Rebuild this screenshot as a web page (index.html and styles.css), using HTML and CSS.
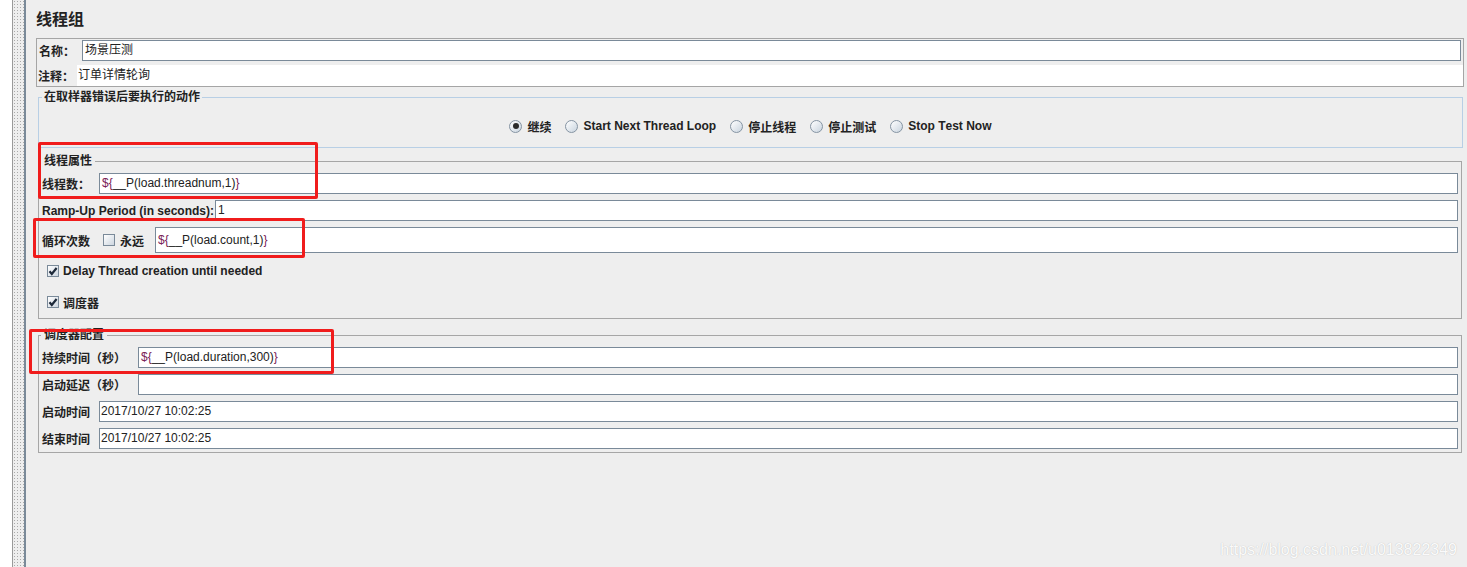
FILE: index.html
```html
<!DOCTYPE html>
<html lang="zh-CN">

<head>
    <meta charset="UTF-8">
    <title>线程组</title>
    <link rel="stylesheet" href="styles.css">
</head>

<body>
    <div class="app">
        <div class="splitter">
            <div class="split-white"></div>
            <div class="split-dots"></div>
            <div class="split-bar"></div>
        </div>

        <div class="panel">
            <h1 class="panel-title">线程组</h1>

            <div class="name-box">
                <div class="name-row">
                    <span class="label">名称：</span>
                    <div class="field">场景压测</div>
                </div>
                <div class="comment-row">
                    <span class="label">注释：</span>
                    <div class="field plain">订单详情轮询</div>
                </div>
            </div>

            <fieldset class="group group-action">
                <legend>在取样器错误后要执行的动作</legend>
                <div class="radio-row">
                    <span class="radio-item"><span class="radio-btn checked"></span>继续</span>
                    <span class="radio-item"><span class="radio-btn"></span>Start Next Thread Loop</span>
                    <span class="radio-item"><span class="radio-btn"></span>停止线程</span>
                    <span class="radio-item"><span class="radio-btn"></span>停止测试</span>
                    <span class="radio-item"><span class="radio-btn"></span>Stop Test Now</span>
                </div>
            </fieldset>

            <fieldset class="group group-thread">
                <legend>线程属性</legend>
                <div class="form-row row-threads">
                    <span class="label w-threads">线程数：</span>
                    <div class="field"><span class="var">${</span>__P(load.threadnum,1)<span class="var">}</span></div>
                </div>
                <div class="form-row row-ramp">
                    <span class="label">Ramp-Up Period (in seconds):</span>
                    <div class="field">1</div>
                </div>
                <div class="form-row row-loop">
                    <span class="label w-loop">循环次数</span>
                    <span class="check-box"></span>
                    <span class="label forever">永远</span>
                    <div class="field tall"><span class="var">${</span>__P(load.count,1)<span class="var">}</span></div>
                </div>
                <div class="check-row first">
                    <span class="check-box"><svg width="10" height="10" viewBox="0 0 10 10"><path d="M1.5 5.2 L3.8 8 L8.6 2" fill="none" stroke="#1e2a3a" stroke-width="2.2"/></svg></span>
                    <span class="label">Delay Thread creation until needed</span>
                </div>
                <div class="check-row">
                    <span class="check-box"><svg width="10" height="10" viewBox="0 0 10 10"><path d="M1.5 5.2 L3.8 8 L8.6 2" fill="none" stroke="#1e2a3a" stroke-width="2.2"/></svg></span>
                    <span class="label">调度器</span>
                </div>
            </fieldset>

            <fieldset class="group group-sched">
                <legend>调度器配置</legend>
                <div class="form-row">
                    <span class="label w-sched-long">持续时间（秒）</span>
                    <div class="field"><span class="var">${</span>__P(load.duration,300)<span class="var">}</span></div>
                </div>
                <div class="form-row">
                    <span class="label w-sched-long">启动延迟（秒）</span>
                    <div class="field"></div>
                </div>
                <div class="form-row">
                    <span class="label w-sched-short">启动时间</span>
                    <div class="field date">2017/10/27 10:02:25</div>
                </div>
                <div class="form-row">
                    <span class="label w-sched-short">结束时间</span>
                    <div class="field date">2017/10/27 10:02:25</div>
                </div>
            </fieldset>
        </div>

        <!-- anotaciones en rojo -->
        <div class="mark mark-threads"></div>
        <div class="mark mark-loop"></div>
        <div class="mark mark-sched"></div>

        <div class="watermark">https://blog.csdn.net/u013822349</div>
    </div>
</body>

</html>
```

FILE: styles.css
```css
body {
    margin: 0;
    padding: 0;
    background-color: #eeeeee;
    font-family: "Liberation Sans", "Noto Sans CJK SC", sans-serif;
    font-size: 12px;
    color: #333;
    overflow: hidden;
    text-spacing-trim: space-all;
    font-kerning: none;
}

.app {
    display: flex;
    height: 567px;
    position: relative;
}

/* Divisor izquierdo */
.splitter {
    display: flex;
    flex: 0 0 26px;
}

.split-white {
    width: 12px;
    background-color: #fff;
    border-right: 1px solid #9a9a9a;
}

.split-dots {
    width: 11px;
    background-color: #eeeeee;
    background-image: radial-gradient(circle, #a9a9a9 0.7px, transparent 0.9px);
    background-size: 3px 3px;
}

.split-bar {
    width: 2px;
    background-color: #7a8a99;
}

.panel {
    flex: 1;
    padding: 10px 3px 0 10px;
    min-width: 0;
}

.panel-title {
    margin: 0 0 8px;
    font-size: 16px;
    line-height: 20px;
    font-weight: bold;
    color: #222;
}

.label {
    font-weight: bold;
    color: #222;
    white-space: nowrap;
}

.field {
    flex: 1;
    height: 21px;
    box-sizing: border-box;
    background-color: #fff;
    border: 1px solid #7a8a99;
    padding: 0 2px;
    line-height: 19px;
    color: #222;
    white-space: nowrap;
    overflow: hidden;
}

.field.plain {
    border: none;
    line-height: 21px;
    padding-left: 1px;
}

.field.tall {
    height: 26px;
    line-height: 24px;
}

.field.date {
    padding-left: 1px;
}

.var {
    color: #7b2256;
}

/* Nombre y comentario */
.name-box {
    border: 1px solid #a5a5a5;
    padding: 1px 0 0;
}

.name-row {
    display: flex;
    align-items: center;
    padding: 0 2px 0 2px;
}

.name-row .label {
    margin-right: 7px;
}

.comment-row {
    display: flex;
    align-items: center;
    margin-top: 4px;
    padding-left: 1px;
}

.comment-row .label {
    margin-right: 3px;
}

/* Grupos */
.group {
    margin: 0 2px 0 2px;
    padding: 0 3px;
    border: 1px solid #a6a6a6;
    min-inline-size: 0;
}

.group legend {
    padding: 0 3px;
    font-weight: bold;
    line-height: 14px;
    color: #222;
}

.group-action {
    margin: 3px 1px 0 2px;
    padding: 12px 3px 11px;
    border-color: #b8cfe5;
}

.group-action legend {
    padding: 0 2px;
}

.radio-row {
    display: flex;
    justify-content: center;
    align-items: center;
    gap: 14px;
    height: 20px;
}

.radio-item {
    display: flex;
    align-items: center;
    font-weight: bold;
    color: #222;
}

.radio-btn {
    width: 13px;
    height: 13px;
    box-sizing: border-box;
    border-radius: 50%;
    border: 1px solid #8594a3;
    background: linear-gradient(135deg, #ffffff, #c9d4df);
    margin-right: 5px;
    position: relative;
}

.radio-btn.checked::after {
    content: "";
    position: absolute;
    left: 2.5px;
    top: 2.5px;
    width: 6px;
    height: 6px;
    border-radius: 50%;
    background-color: #2a2a2a;
}

.group-thread {
    margin-top: 6px;
    padding: 5px 3px 4px 2px;
}

.form-row {
    display: flex;
    align-items: center;
    margin-bottom: 6px;
    padding-left: 1px;
}

.form-row.row-loop {
    margin-bottom: 0;
}

.w-threads {
    width: 57px;
}

.row-ramp .label {
    margin-right: 1px;
}

.w-loop {
    width: 61px;
}

.forever {
    margin: 0 11px 0 5px;
}

.check-box {
    width: 12px;
    height: 12px;
    box-sizing: border-box;
    border: 1px solid #7a8a99;
    background: linear-gradient(135deg, #ffffff, #cdd6e0);
    display: inline-flex;
    align-items: center;
    justify-content: center;
    flex: 0 0 12px;
}

.check-row {
    display: flex;
    align-items: center;
    height: 24px;
    margin-top: 7px;
    padding-left: 6px;
}

.check-row.first {
    margin-top: 6px;
}

.check-row .label {
    margin-left: 4px;
}

.group-sched {
    margin-top: 9px;
    padding: 5px 3px 3px 2px;
}

.group-sched .form-row:last-child {
    margin-bottom: 0;
}

.w-sched-long {
    width: 96px;
    font-feature-settings: "halt" 0, "chws" 0;
}

.w-sched-short {
    width: 57px;
}

/* Recuadros rojos */
.mark {
    position: absolute;
    border: 3px solid #f01c1c;
    border-radius: 2px;
    box-sizing: border-box;
}

.mark-threads {
    left: 38px;
    top: 142px;
    width: 280px;
    height: 57px;
}

.mark-loop {
    left: 33px;
    top: 218px;
    width: 272px;
    height: 40px;
}

.mark-sched {
    left: 29px;
    top: 329px;
    width: 305px;
    height: 45px;
}

.watermark {
    position: absolute;
    right: 10px;
    bottom: 8px;
    font-size: 16px;
    color: rgba(255, 255, 255, 0.95);
    text-shadow: 0 0 1px #b5b5b5;
}
```
